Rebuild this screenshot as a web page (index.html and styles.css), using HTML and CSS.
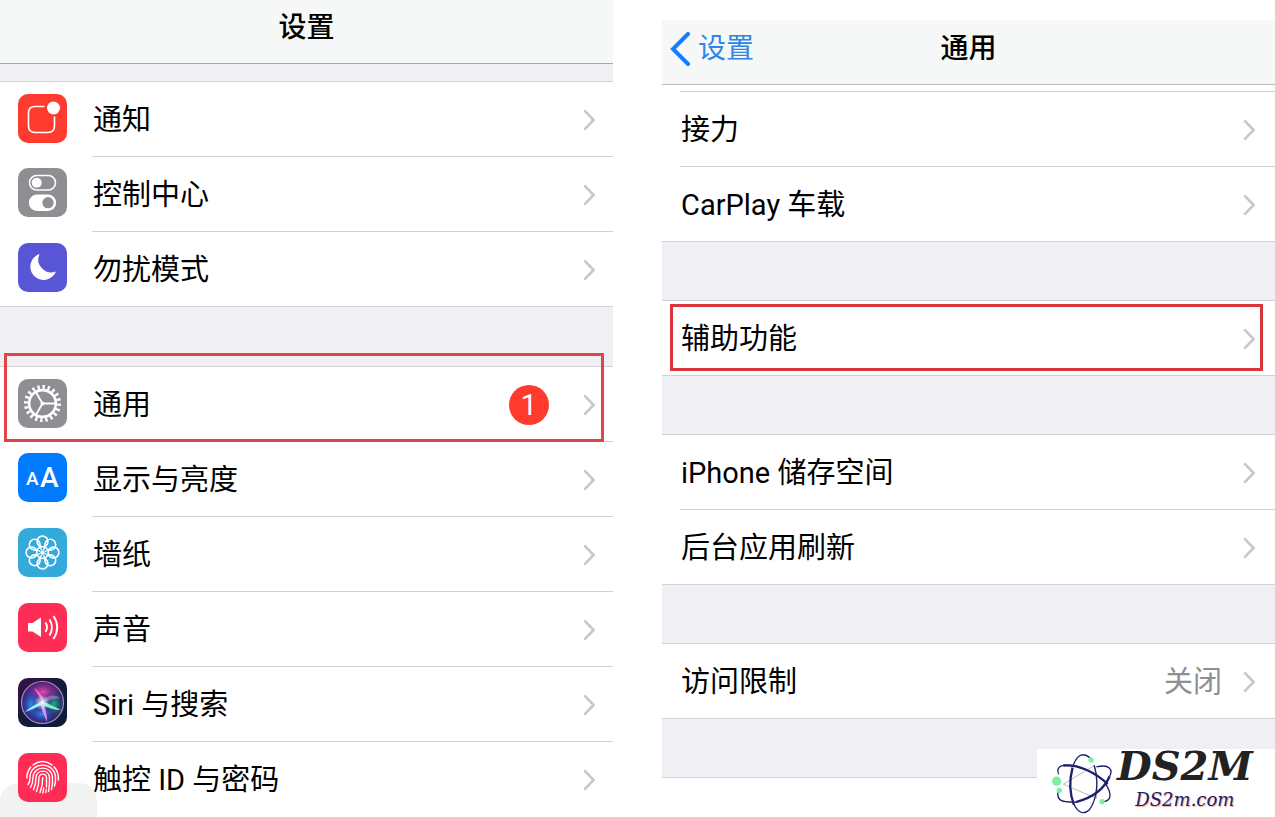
FILE: index.html
```html
<!DOCTYPE html>
<html lang="zh-CN">
<head>
    <meta charset="utf-8">
    <meta name="viewport" content="width=device-width, initial-scale=1">
    <title>设置 - 通用</title>
    <link rel="stylesheet" href="styles.css">
</head>
<body>
    <svg class="defs" aria-hidden="true">
        <symbol id="chevron" viewBox="0 0 12 22">
            <path d="M1.3 1.3 L10.6 11 L1.3 20.7" fill="none" stroke="currentColor" stroke-width="2.6"/>
        </symbol>
    </svg>

    <div class="screens">
        <!-- settings list -->
        <section class="screen screen-settings">
            <header class="navbar">
                <h1>设置</h1>
            </header>
            <ul class="group">
                <li>
                    <a class="row" href="#">
                        <svg class="icon" viewBox="0 0 49 49">
                            <rect width="49" height="49" rx="10" fill="#ff3b30"/>
                            <path d="M26.500 12.500 H17 Q10.500 12.500 10.500 19 V32 Q10.500 38.500 17 38.500 H30 Q36.500 38.500 36.500 32 V22.500" fill="none" stroke="#fff" stroke-width="1.600"/>
                            <circle cx="35.500" cy="14" r="6.500" fill="#fff"/>
                        </svg>
                        <span class="body">通知<svg class="chevron"><use href="#chevron"/></svg></span>
                    </a>
                </li>
                <li>
                    <a class="row" href="#">
                        <svg class="icon" viewBox="0 0 49 49">
                            <rect width="49" height="49" rx="10" fill="#8e8e93"/>
                            <rect x="11.500" y="7.500" width="26" height="14.500" rx="7.200" fill="none" stroke="#fff" stroke-width="1.500"/>
                            <circle cx="18.700" cy="14.700" r="5" fill="#fff"/>
                            <rect x="10.800" y="26.500" width="27.400" height="16.500" rx="8.200" fill="#fff"/>
                            <circle cx="30" cy="34.700" r="5.600" fill="#8e8e93"/>
                        </svg>
                        <span class="body">控制中心<svg class="chevron"><use href="#chevron"/></svg></span>
                    </a>
                </li>
                <li>
                    <a class="row" href="#">
                        <svg class="icon" viewBox="0 0 49 49">
                            <rect width="49" height="49" rx="10" fill="#5856d6"/>
                            <path d="M21.500 11 A13.300 13.300 0 1 0 38 28.500 A13 13 0 0 1 21.500 11 Z" fill="#fff"/>
                        </svg>
                        <span class="body">勿扰模式<svg class="chevron"><use href="#chevron"/></svg></span>
                    </a>
                </li>
            </ul>
            <ul class="group">
                <li class="marked">
                    <a class="row" href="#">
                        <svg class="icon" viewBox="0 0 49 49">
                            <rect width="49" height="49" rx="10" fill="#8e8e93"/>
                            <g fill="none" stroke="#fff">
                                <circle cx="24.500" cy="24.500" r="16.500" stroke-width="4.200" pathLength="40" stroke-dasharray="0.900 1.100"/>
                                <circle cx="24.500" cy="24.500" r="13.400" stroke-width="2.600"/>
                                <path d="M24.500 24.500 H38 M24.500 24.500 L17.700 12.800 M24.500 24.500 L17.700 36.200" stroke-width="1.800"/>
                            </g>
                            <circle cx="24.500" cy="24.500" r="2" fill="#fff"/>
                        </svg>
                        <span class="body">通用<span class="badge">1</span><svg class="chevron"><use href="#chevron"/></svg></span>
                    </a>
                </li>
                <li>
                    <a class="row" href="#">
                        <svg class="icon" viewBox="0 0 49 49">
                            <rect width="49" height="49" rx="10" fill="#007aff"/>
                            <text class="icon-letter" x="8" y="32" font-size="19">A</text>
                            <text class="icon-letter" x="22" y="34" font-size="28">A</text>
                        </svg>
                        <span class="body">显示与亮度<svg class="chevron"><use href="#chevron"/></svg></span>
                    </a>
                </li>
                <li>
                    <a class="row" href="#">
                        <svg class="icon" viewBox="0 0 49 49">
                            <rect width="49" height="49" rx="10" fill="#34aadc"/>
                            <g fill="none" stroke="#fff" stroke-width="1.600">
                                <circle cx="35.500" cy="24.500" r="5.400"/>
                                <circle cx="32.300" cy="32.300" r="5.400"/>
                                <circle cx="24.500" cy="35.500" r="5.400"/>
                                <circle cx="16.700" cy="32.300" r="5.400"/>
                                <circle cx="13.500" cy="24.500" r="5.400"/>
                                <circle cx="16.700" cy="16.700" r="5.400"/>
                                <circle cx="24.500" cy="13.500" r="5.400"/>
                                <circle cx="32.300" cy="16.700" r="5.400"/>
                                <path d="M27 25.500 L31 27.500 M27 23.500 L31 21.500 M22 25.500 L18 27.500 M22 23.500 L18 21.500 M25.500 27 L27.500 31 M23.500 27 L21.500 31 M25.500 22 L27.500 18 M23.500 22 L21.500 18" stroke-width="1.300"/>
                            </g>
                            <circle cx="24.500" cy="24.500" r="2.200" fill="#fff"/>
                        </svg>
                        <span class="body">墙纸<svg class="chevron"><use href="#chevron"/></svg></span>
                    </a>
                </li>
                <li>
                    <a class="row" href="#">
                        <svg class="icon" viewBox="0 0 49 49">
                            <rect width="49" height="49" rx="10" fill="#ff2d55"/>
                            <path d="M10 20 H14.500 L23 14.500 V34 L14.500 28.500 H10 Z" fill="#fff"/>
                            <path d="M27.500 19.500 Q30.500 24.300 27.500 29 M31.500 16.500 Q36.500 24.300 31.500 32.500 M35.500 13 Q43 24.300 35.500 36" fill="none" stroke="#fff" stroke-width="1.900"/>
                        </svg>
                        <span class="body">声音<svg class="chevron"><use href="#chevron"/></svg></span>
                    </a>
                </li>
                <li>
                    <a class="row" href="#">
                        <svg class="icon" viewBox="0 0 49 49">
                            <defs>
                                <linearGradient id="siri-tile" x1="0" y1="0" x2="1" y2="1">
                                    <stop offset="0" stop-color="#3a1048"/>
                                    <stop offset="0.500" stop-color="#151a3c"/>
                                    <stop offset="1" stop-color="#0b1c3a"/>
                                </linearGradient>
                                <radialGradient id="siri-pink"><stop offset="0" stop-color="#e04bb0"/><stop offset="1" stop-color="#a0209a" stop-opacity="0"/></radialGradient>
                                <radialGradient id="siri-blue"><stop offset="0" stop-color="#2f8df0"/><stop offset="1" stop-color="#2440b0" stop-opacity="0"/></radialGradient>
                                <radialGradient id="siri-green"><stop offset="0" stop-color="#18b088"/><stop offset="1" stop-color="#0a5a60" stop-opacity="0"/></radialGradient>
                                <radialGradient id="siri-glow"><stop offset="0" stop-color="#fff"/><stop offset="1" stop-color="#b8f4ff" stop-opacity="0"/></radialGradient>
                            </defs>
                            <rect width="49" height="49" rx="10" fill="url(#siri-tile)"/>
                            <circle cx="24.500" cy="24.500" r="21" fill="#3a2072"/>
                            <ellipse cx="25" cy="14" rx="18" ry="12" fill="url(#siri-pink)"/>
                            <ellipse cx="13" cy="26" rx="11" ry="16" fill="url(#siri-blue)"/>
                            <ellipse cx="36" cy="26" rx="11" ry="14" fill="url(#siri-green)"/>
                            <ellipse cx="24" cy="36" rx="14" ry="10" fill="url(#siri-blue)"/>
                            <path d="M24 24 Q14 27 7 34 Q16 31 25 26 Z" fill="#8ff4fa"/>
                            <path d="M24 23 Q34 27 43 32 Q33 32 23 26 Z" fill="#7cf0c8"/>
                            <path d="M25 24 Q29 34 29 44 Q24 34 22 25 Z" fill="#e68df0"/>
                            <path d="M25 24 Q20 17 16 10 Q23 14 26 23 Z" fill="#f06fc0"/>
                            <path d="M24 23 Q33 14 42 20 Q32 21 25 25 Z" fill="#a878c8" opacity="0.700"/>
                            <circle cx="24" cy="24.500" r="8" fill="url(#siri-glow)"/>
                            <circle cx="24.500" cy="24.500" r="21" fill="none" stroke="#9a94b0" stroke-width="1.200"/>
                        </svg>
                        <span class="body">Siri 与搜索<svg class="chevron"><use href="#chevron"/></svg></span>
                    </a>
                </li>
                <li>
                    <a class="row" href="#">
                        <svg class="icon" viewBox="0 0 49 49">
                            <rect width="49" height="49" rx="10" fill="#ff2d55"/>
                            <g fill="none" stroke="#fff" stroke-width="1.400" stroke-linecap="round">
                                <path d="M15 12 Q24.500 5 34 12"/>
                                <path d="M8.800 25 Q9 18.500 12.800 14 M36 13.800 Q41 19 40.300 27"/>
                                <path d="M10 31.500 Q12 29 12 24.500 C12 8 37 8 37.500 24.500 Q37.800 29 36.500 33"/>
                                <path d="M12.500 34.500 Q15 30 15 24.500 C15.500 12 34 12 34.500 24.500 Q34.800 31 33.500 36.500"/>
                                <path d="M15.500 36.800 Q18 31 18 24.500 C18.500 16 31 16 31.500 24.500 Q31.700 32 30.500 38.500"/>
                                <path d="M18.500 38.500 Q21 32 21 24.500 C21.500 20 28 20 28.500 24.500 V34"/>
                                <path d="M22 39.500 Q25 32 24.700 24.500 M28.300 36.500 L27.800 39.500 M25.700 35 L24.900 40"/>
                            </g>
                        </svg>
                        <span class="body">触控 ID 与密码<svg class="chevron"><use href="#chevron"/></svg></span>
                    </a>
                </li>
            </ul>
            <div class="touch-pad"></div>
        </section>

        <!-- general page -->
        <section class="screen screen-general">
            <header class="navbar">
                <a class="back" href="#">
                    <svg class="back-arrow" viewBox="0 0 20 34"><path d="M18 2 L3 17 L18 32" fill="none" stroke="#157efb" stroke-width="4" stroke-linecap="round"/></svg>设置
                </a>
                <h1>通用</h1>
            </header>
            <ul class="group group-cut">
                <li><a class="row" href="#"><span class="body">接力<svg class="chevron"><use href="#chevron"/></svg></span></a></li>
                <li><a class="row" href="#"><span class="body">CarPlay 车载<svg class="chevron"><use href="#chevron"/></svg></span></a></li>
            </ul>
            <ul class="group">
                <li class="marked"><a class="row" href="#"><span class="body">辅助功能<svg class="chevron"><use href="#chevron"/></svg></span></a></li>
            </ul>
            <ul class="group">
                <li><a class="row" href="#"><span class="body">iPhone 储存空间<svg class="chevron"><use href="#chevron"/></svg></span></a></li>
                <li><a class="row" href="#"><span class="body">后台应用刷新<svg class="chevron"><use href="#chevron"/></svg></span></a></li>
            </ul>
            <ul class="group">
                <li><a class="row" href="#"><span class="body">访问限制<span class="value">关闭</span><svg class="chevron"><use href="#chevron"/></svg></span></a></li>
            </ul>
            <div class="group group-tail"></div>
        </section>
    </div>

    <div class="watermark">
        <svg class="atom" viewBox="60 335 190 190" fill="none">
            <path d="M100 432 L195 375 Q205 430 200 475 Z" stroke="#b9b9bd" stroke-width="3"/>
            <g stroke="#1c1f6b" stroke-width="4">
                <path d="M130 376 C143 338 163 338 180 352 M193 375 C208 420 202 480 178 510 C160 527 142 515 132 492"/>
                <path d="M86 402 C76 375 100 372 130 376 M228 432 C248 462 246 486 214 484"/>
                <path d="M84 455 C80 480 90 487 140 486 M200 380 C240 370 250 390 240 408"/>
            </g>
            <g stroke="#1c1f6b" stroke-width="7">
                <path d="M128 382 C118 420 120 462 132 494"/>
                <path d="M100 376 C145 372 195 395 234 432"/>
                <path d="M138 486 C180 475 222 450 240 408"/>
            </g>
            <g fill="#7df0a4">
                <circle cx="80" cy="423" r="14"/>
                <circle cx="88" cy="451" r="8"/>
                <circle cx="184" cy="359" r="8"/>
                <circle cx="217" cy="485" r="8"/>
            </g>
        </svg>
        <div class="brand">
            <strong>DS2M</strong>
            <span>DS2m.com</span>
        </div>
    </div>
</body>
</html>
```
FILE: styles.css
```css
* {
	box-sizing: border-box;
}

body {
	position: relative;
	margin: 0;
	background-color: #fff;
	color: #000;
	font-family: Roboto, "Noto Sans CJK SC", sans-serif;
	font-size: 29px;
	line-height: 40px;
}

a {
	color: inherit;
	text-decoration: none;
}

.defs {
	position: absolute;
	width: 0;
	height: 0;
}

.screens {
	display: flex;
	gap: 49px;
	min-height: 100vh;
}

.screen {
	position: relative;
	flex: 1;
	display: flex;
	flex-direction: column;
	background-color: #efeff4;
}

.screen-general {
	border-top: 20px solid #fff;
}

/* top bar */
.navbar {
	display: grid;
	grid-template-columns: 1fr auto 1fr;
	align-items: center;
	height: 64px;
	padding: 0 8px 8px;
	background-color: #f6f7f7;
	border-bottom: 1px solid #a8a8ac;
}

.screen-general .navbar {
	height: 65px;
	padding-bottom: 6px;
	border-color: #b9b9bc;
}

.navbar h1 {
	grid-column: 2;
	margin: 0;
	font-size: 28px;
	font-weight: 500;
}

.back {
	display: flex;
	align-items: center;
	gap: 8px;
	color: #2e87e8;
	font-size: 28px;
}

.back-arrow {
	width: 20px;
	height: 34px;
}

/* lists */
.group {
	list-style: none;
	margin: 59px 0 0;
	padding: 0;
	background-color: #fff;
	border-top: 1px solid #d2d2d6;
	border-bottom: 1px solid #d2d2d6;
}

.navbar + .group {
	margin-top: 17px;
}

.screen-settings .group:nth-of-type(2) {
	flex: 1;
	border-bottom: none;
}

.screen-general .group {
	margin-top: 58px;
}

.screen-general .group-cut {
	margin-top: 0;
	padding-top: 6px;
	border-top: none;
}

.group li {
	position: relative;
}

.row {
	display: flex;
	align-items: center;
	padding-left: 18px;
}

.icon {
	position: relative;
	z-index: 1;
	width: 49px;
	height: 49px;
	margin: 0 25px 2px 0;
}

.icon-letter {
	fill: #fff;
	font-family: Roboto, sans-serif;
	font-weight: 500;
}

.body {
	flex: 1;
	display: flex;
	align-items: center;
	height: 74px;
	padding: 2px 18px 0 1px;
}

.screen-general .body {
	padding-right: 20px;
}

.group li + li .body,
.group-cut .body {
	height: 75px;
	border-top: 1px solid #d2d2d6;
}

.chevron {
	width: 12px;
	height: 22px;
	margin-left: auto;
	color: #c7c7cc;
}

.badge {
	width: 40px;
	margin-left: auto;
	margin-right: 34px;
	background-color: #ff3b30;
	border-radius: 50%;
	color: #fff;
	text-align: center;
}

.value {
	margin-left: auto;
	margin-right: 21px;
	color: #8e8e93;
}

.badge + .chevron,
.value + .chevron {
	margin-left: 0;
}

.group-tail {
	flex: 1;
	border-bottom: none;
}

/* red frames around the items to tap */
.marked::after {
	content: "";
	position: absolute;
	z-index: 2;
	top: -14px;
	right: 9px;
	bottom: -1px;
	left: 4px;
	border: 3px solid #e0434a;
	pointer-events: none;
}

.screen-general .marked::after {
	top: 3px;
	right: 12px;
	bottom: 4px;
	left: 8px;
	border-color: #d9363c;
}

.touch-pad {
	position: absolute;
	left: 0;
	bottom: 0;
	width: 97px;
	height: 34px;
	background-color: rgba(0, 0, 0, 0.05);
	border-radius: 18px 18px 0 0;
}

/* site mark */
.watermark {
	position: absolute;
	right: 0;
	bottom: 0;
	display: flex;
	align-items: center;
	gap: 4px;
	width: 238px;
	height: 68px;
	padding-left: 13px;
	background-color: #fff;
}

.atom {
	width: 63px;
	height: 63px;
}

.brand {
	display: flex;
	flex-direction: column;
	align-items: center;
	margin-bottom: 12px;
	font-family: "DejaVu Serif", serif;
	font-style: italic;
}

.brand strong {
	color: #222;
	font-size: 40px;
	line-height: 46px;
}

.brand span {
	color: #1c1f6b;
	font-size: 18px;
	line-height: 22px;
	text-shadow: 1px 1px 1px #f0a8a0;
}
```
